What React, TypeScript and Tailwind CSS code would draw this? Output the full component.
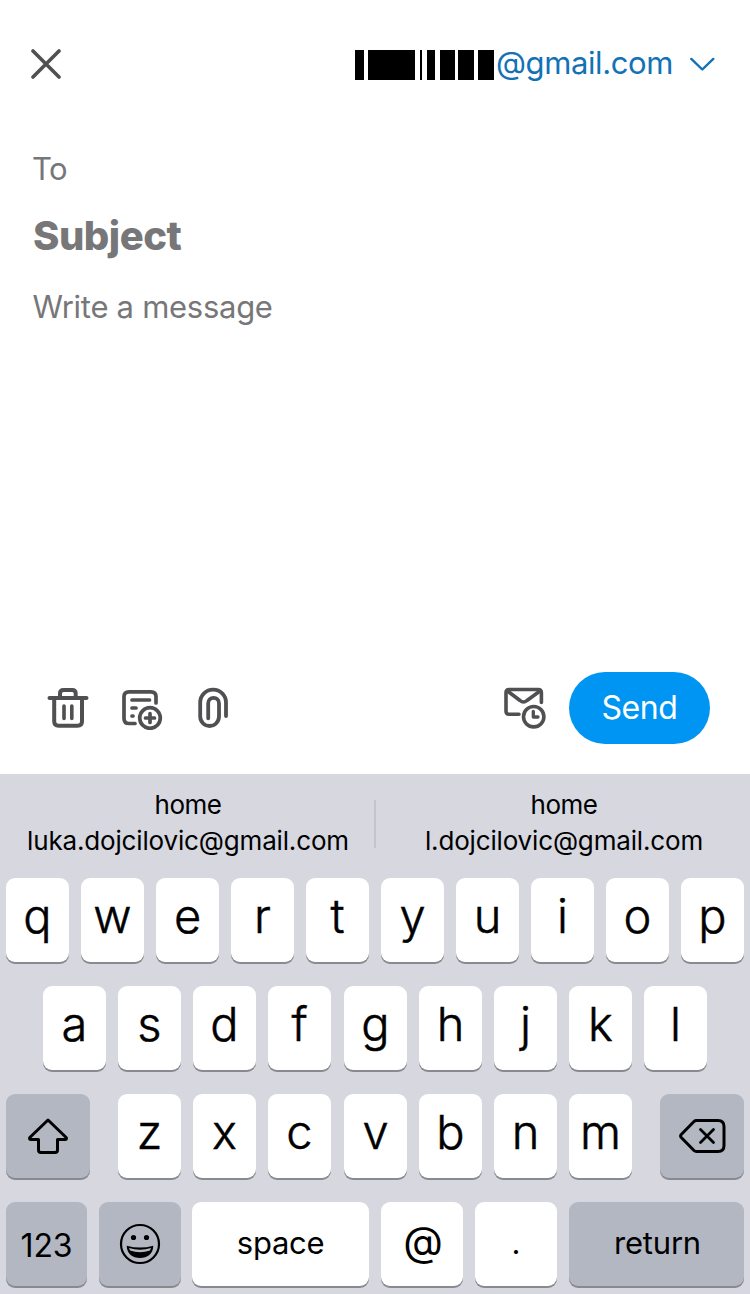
import type { ReactNode } from "react";

const letter = "text-[47px] font-light leading-[76px] [-webkit-text-stroke:0.5px_black]";

function Key({ children, className = "w-[63px]", muted = false }: { children: ReactNode; className?: string; muted?: boolean }) {
  return (
    <button
      className={`flex h-[84px] shrink-0 items-start justify-center rounded-[9px] shadow-[0_2px_0_#898a8f] ${muted ? "bg-[#b3b7c2]" : "bg-white"} ${className}`}
    >
      {children}
    </button>
  );
}

function Letters({ keys }: { keys: string }) {
  return (
    <>
      {keys.split("").map((k) => (
        <Key key={k}>
          <span className={letter}>{k}</span>
        </Key>
      ))}
    </>
  );
}

function Redacted() {
  return (
    <svg className="mt-[2px]" width="140" height="30" viewBox="0 0 140 30" fill="#000" shapeRendering="crispEdges">
      <rect width="9" height="30" />
      <rect x="13" width="47" height="30" />
      <rect x="65" width="2" height="30" />
      <rect x="72" width="8" height="30" />
      <rect x="85" width="15" height="30" />
      <rect x="103" width="16" height="30" />
      <rect x="123" width="16" height="30" />
    </svg>
  );
}

export default function App() {
  return (
    <main className="flex h-[1294px] w-[750px] flex-col overflow-hidden bg-white font-['Inter',sans-serif] text-black">
      <header className="flex h-[128px] shrink-0 items-center justify-between pl-[31px] pr-[35px]">
        <button aria-label="Close">
          <svg width="30" height="30" viewBox="0 0 30 30" fill="none" stroke="#505052" strokeWidth="3.6" strokeLinecap="round">
            <path d="M2 2 28 28M28 2 2 28" />
          </svg>
        </button>
        <button className="flex items-center text-[#1272b6]">
          <Redacted />
          <span className="ml-px w-[194px] whitespace-nowrap pb-[2px] text-left text-[31px] leading-[38px] tracking-[-0.4px]">@gmail.com</span>
          <svg width="25" height="14" viewBox="0 0 25 14" fill="none" stroke="currentColor" strokeWidth="2.4" strokeLinecap="round" strokeLinejoin="round">
            <path d="M1.3 1.9 12.3 12.5 23.300 1.900" />
          </svg>
        </button>
      </header>

      <section className="flex h-[520px] shrink-0 flex-col pl-[32px] pt-[21px] text-[#777779]">
        <p className="text-[31px] leading-[40px] tracking-[-0.5px]">To</p>
        <p className="mt-[22px] pl-px text-[40px] font-extrabold leading-[50px] tracking-[-0.500px]">Subject</p>
        <p className="mt-[26px] pl-[0.5px] text-[31px] leading-[40px] tracking-[-0.28px]">Write a message</p>
      </section>

      <div className="flex h-[126px] shrink-0 items-center justify-between pb-[6px] pl-[47px] pr-[40px]">
        <div className="flex items-center text-[#505052]">
          <svg width="42" height="42" viewBox="0 0 42 42" fill="none" stroke="currentColor" strokeWidth="4" strokeLinecap="round" strokeLinejoin="round">
            <path d="M2.500 11H39.500M13 10V6.500Q13 3 16.500 3H25.200Q28.700 3 28.700 6.500V10M7.200 12V34.300Q7.200 38.800 11.700 38.800H30.500Q35 38.800 35 34.300V12" />
            <path d="M17 19V31.500M24.800 19V31.500" strokeWidth="3.600" />
          </svg>
          <svg className="ml-[32px]" width="42" height="44" viewBox="0 0 42 44" fill="none" stroke="currentColor" strokeWidth="3.700" strokeLinecap="round" strokeLinejoin="round">
            <path d="M35 17V10.800Q35 5.800 30 5.800H8Q3 5.800 3 10.800V32.500Q3 37.500 8 37.500H14" />
            <path d="M11 14H28.500M11 22H15M11 30H12" />
            <circle cx="29" cy="32" r="10.300" />
            <path d="M29 27.500V36.500M24.500 32H33.500" />
          </svg>
          <svg className="ml-[34px]" width="34" height="42" viewBox="0 0 34 42" fill="none" stroke="currentColor" strokeWidth="3.800" strokeLinecap="round">
            <path d="M11.200 31.300V16.200A5.400 5.400 0 0 1 22 16.200V29.600A9.400 9.400 0 0 1 3.200 29.600V15.500A12.900 12.900 0 0 1 29 15.500V29" />
          </svg>
        </div>
        <div className="flex items-center">
          <svg className="text-[#505052]" width="44" height="44" viewBox="0 0 44 44" fill="none" stroke="currentColor" strokeWidth="3.600" strokeLinecap="round" strokeLinejoin="round">
            <path d="M38.400 16.500V6.500Q38.400 3.500 35.400 3.500H6Q3 3.500 3 6.500V25.300Q3 28.300 6 28.300H16" />
            <path d="M4.500 5 17 14.500Q20.500 17.500 24 14.500L37 5" />
            <circle cx="30.700" cy="30.700" r="10.200" />
            <path d="M30.300 25.500V31H35" strokeWidth="3.300" />
          </svg>
          <button className="ml-[22px] h-[72px] w-[141px] rounded-full bg-[#0094f3] text-[32px] leading-[72px] tracking-[-0.4px] text-white">Send</button>
        </div>
      </div>

      <section className="flex h-[520px] shrink-0 flex-col bg-[#d6d7df]">
        <div className="flex h-[104px] shrink-0 items-center pb-[4px] text-center text-[26px] leading-[36px] tracking-[-0.16px]">
          <p className="w-[374px] pb-[2px] pl-[2px]"><span className="tracking-[-0.5px]">home</span><br />luka.dojcilovic@gmail.com</p>
          <div className="h-[48px] w-[2px] shrink-0 bg-[#c3c5cd]" />
          <p className="w-[374px] pb-[2px] pl-[2px]"><span className="tracking-[-0.5px]">home</span><br />l.dojcilovic@gmail.com</p>
        </div>
        <div className="flex flex-col gap-[24px]">
          <div className="flex gap-[12px] pl-[6px]"><Letters keys="qwertyuiop" /></div>
          <div className="flex gap-[12px] pl-[43px]">
            <Letters keys="asdf" />
            <div className="ml-px flex gap-[12px]"><Letters keys="ghjkl" /></div>
          </div>
          <div className="flex px-[6px]">
            <Key muted className="w-[84px]">
              <svg className="mt-[23px]" width="40" height="38" viewBox="0 0 40 38" fill="none" stroke="black" strokeWidth="3" strokeLinejoin="round">
                <path d="M20 3 1.800 20.500Q1 22.300 3 22.500H10.500V33Q10.500 35.500 13 35.500H27Q29.500 35.500 29.500 33V22.500H37Q39 22.300 38.200 20.500Z" />
              </svg>
            </Key>
            <div className="ml-[28px] flex gap-[12px]"><Letters keys="zxc" /></div>
            <div className="ml-[13px] flex gap-[12px]"><Letters keys="vbnm" /></div>
            <Key muted className="ml-[28px] w-[84px]">
              <svg className="mt-[24px]" width="48" height="36" viewBox="0 0 48 36" fill="none" stroke="black" strokeWidth="3" strokeLinecap="round" strokeLinejoin="round">
                <path d="M18.500 2.500H40Q46 2.500 46 8.500V27.500Q46 33.500 40 33.500H18.500Q17 33.500 16 32.500L3 19.300Q2 18 3 16.700L16 3.500Q17 2.500 18.500 2.500Z" />
                <path d="M22.500 11.500 35.500 24.500M35.500 11.500 22.500 24.500" strokeWidth="2.800" />
              </svg>
            </Key>
          </div>
          <div className="flex pl-[6px]">
            <Key muted className="w-[81px]"><span className="text-[32px] leading-[87px] tracking-[-0.1px]">123</span></Key>
            <Key muted className="ml-[12px] w-[82px]">
              <svg className="mt-[21px]" width="42" height="42" viewBox="0 0 42 42">
                <circle cx="21" cy="21" r="19" fill="none" stroke="black" strokeWidth="2.200" />
                <circle cx="14.500" cy="14.500" r="2.600" />
                <circle cx="27.500" cy="14.500" r="2.600" />
                <path d="M7.700 22.700Q21 26.500 34.300 22.700C34 31 28.500 35 21 35C13.500 35 8 31 7.700 22.700Z" />
                <path d="M10 25.100Q21 28.300 32 25.100L31 27.600Q21 31 11 27.600Z" fill="#b3b7c2" />
              </svg>
            </Key>
            <Key className="ml-[11px] w-[177px]"><span className="text-[31px] leading-[82px] tracking-[-0.3px]">space</span></Key>
            <Key className="ml-[12px] w-[82px]"><span className="pl-[2px] text-[41px] leading-[78px]">@</span></Key>
            <Key className="ml-[12px] w-[82px]"><span className="text-[31px] leading-[82px]">.</span></Key>
            <Key muted className="ml-[12px] w-[175px]"><span className="pl-[2px] text-[31px] leading-[82px] tracking-[-0.2px]">return</span></Key>
          </div>
        </div>
      </section>
    </main>
  );
}
